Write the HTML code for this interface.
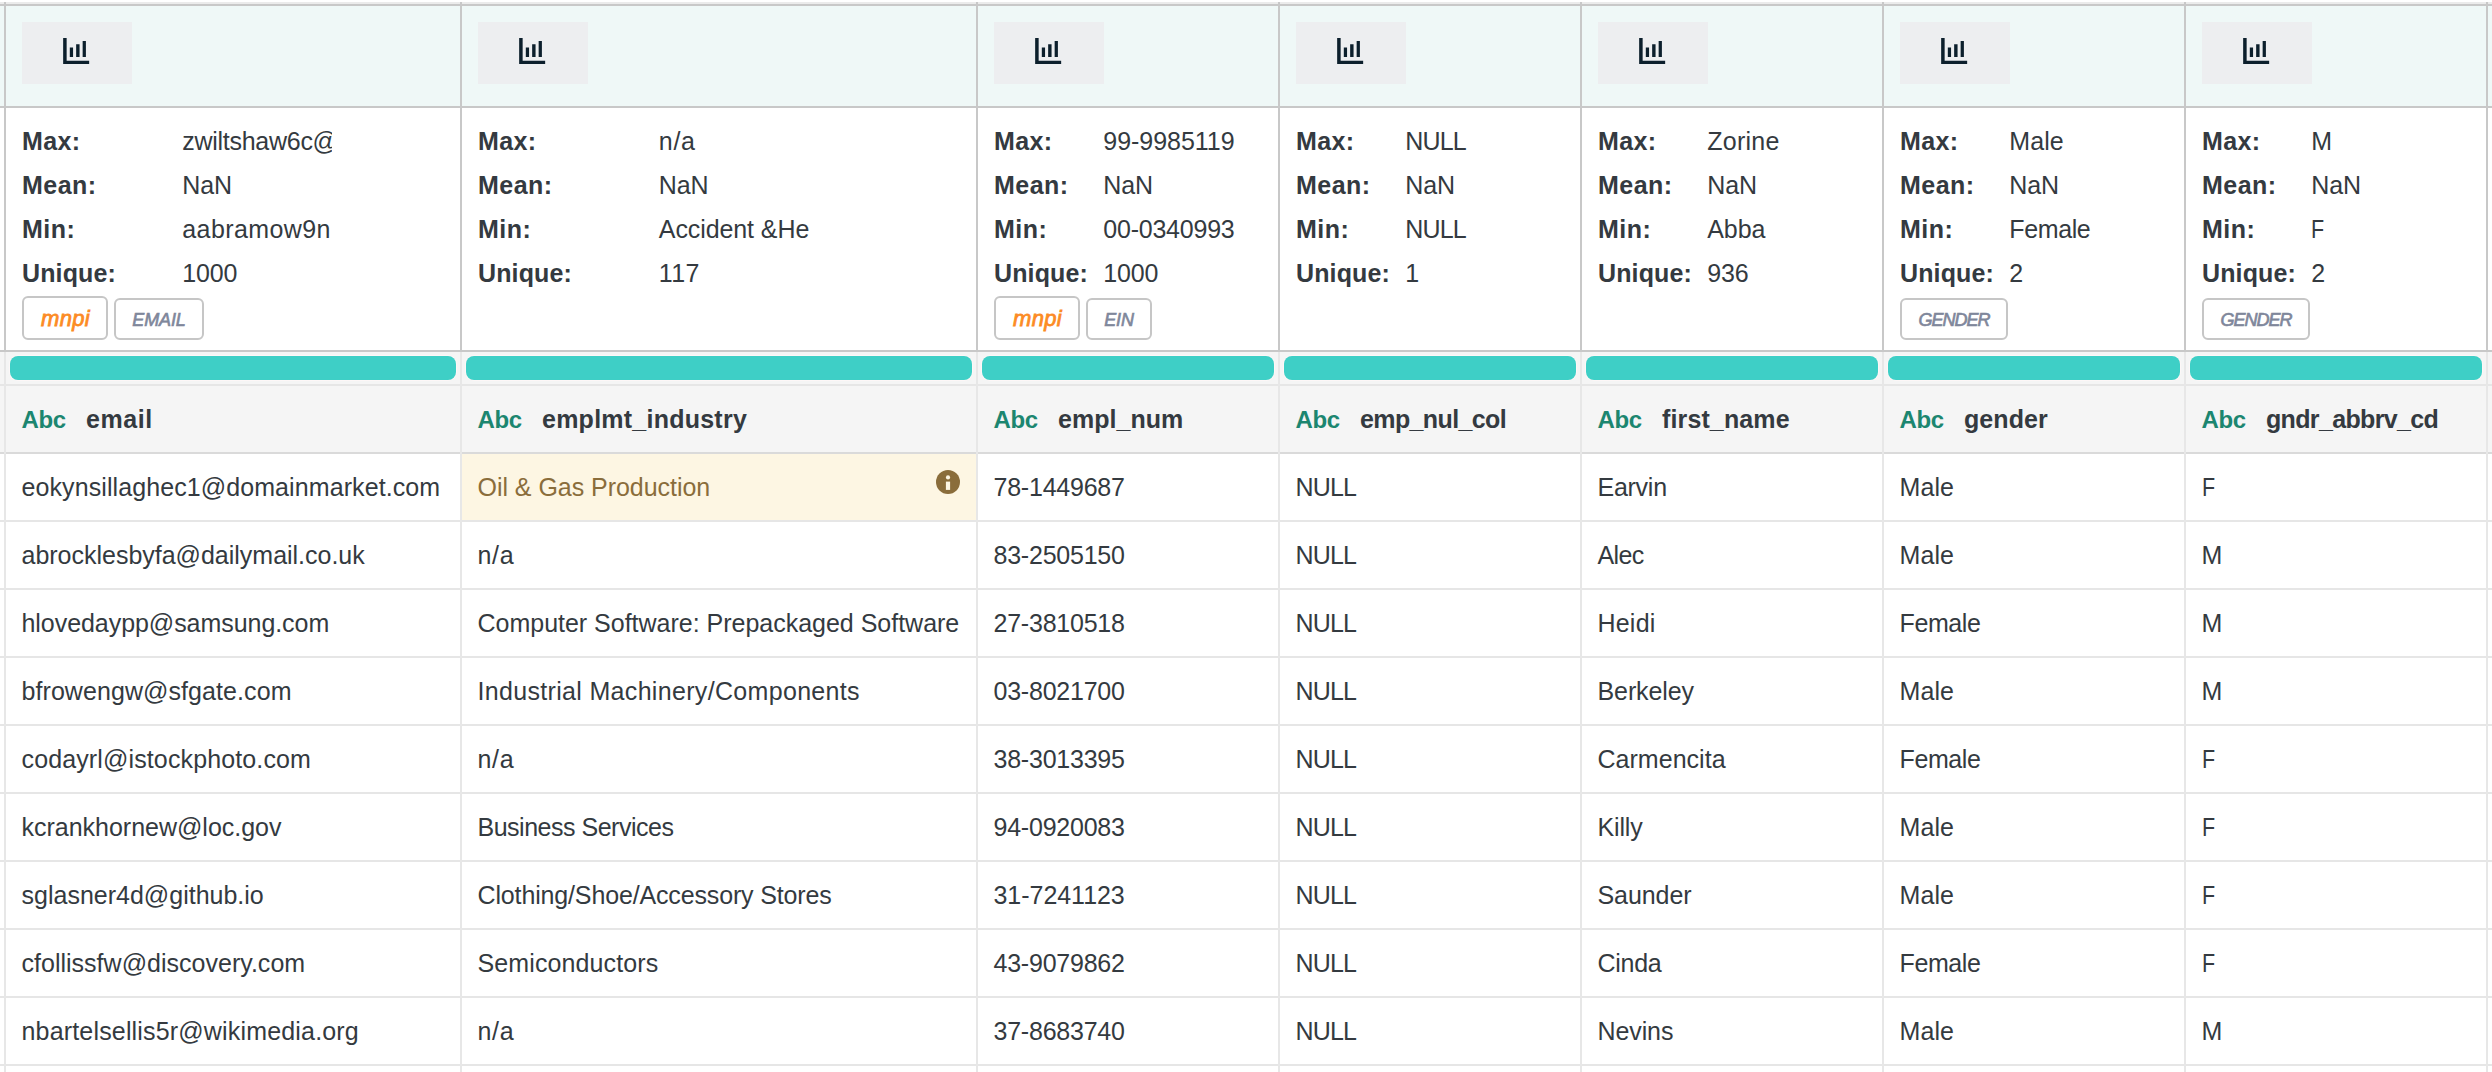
<!DOCTYPE html><html><head><meta charset='utf-8'><title>table</title><style>

html,body{margin:0;padding:0;background:#fff;}
body{width:2492px;height:1072px;position:relative;overflow:hidden;font-family:"Liberation Sans",sans-serif;}
.bg{position:absolute;left:0;width:2492px;}
.vl{position:absolute;width:2px;}
.t{position:absolute;white-space:pre;line-height:30px;color:#343a40;}
.b{font-weight:700;font-size:25px;}
.r{font-size:25px;}
.abc{font-weight:700;font-size:24px;color:#1c8670;}
.hl{color:#8a6d3b;}
.btn{position:absolute;top:22px;width:110px;height:62px;background:#edeef0;}
.btn svg{position:absolute;left:41.4px;top:15.7px;}
.bar{position:absolute;top:356px;height:24px;border-radius:8px;background:#3ecfc6;box-shadow:0 0 0 1px rgba(255,248,248,.8);}
.tag{position:absolute;box-sizing:border-box;border:2px solid #c6c6c6;border-radius:6px;background:#fff;text-align:center;font-style:italic;font-weight:400;white-space:pre;}
.tag.m{top:296px;height:44px;width:86px;color:#fc8b24;font-size:22px;line-height:42px;letter-spacing:0.3px;text-indent:1px;-webkit-text-stroke:0.8px #fc8b24;}
.tag.g{top:298px;height:42px;color:#7f879b;font-size:18px;line-height:41px;-webkit-text-stroke:0.65px #7f879b;}

</style></head><body>
<div class='bg' style='top:2px;height:2px;background:#ebebeb'></div>
<div class='bg' style='top:4px;height:2px;background:#c8c8c8'></div>
<div class='bg' style='top:6px;height:100px;background:#eff8f7'></div>
<div class='bg' style='top:106px;height:2px;background:#c8c8c8'></div>
<div class='bg' style='top:350px;height:2px;background:#c8c8c8'></div>
<div class='bg' style='top:352px;height:32px;background:#f5f5f5'></div>
<div class='bg' style='top:384px;height:2px;background:#e6e6e6'></div>
<div class='bg' style='top:386px;height:66px;background:#f5f5f5'></div>
<div class='bg' style='top:452px;height:2px;background:#dadada'></div>
<div class='bg' style='top:520px;height:2px;background:#e6e6e6'></div>
<div class='bg' style='top:588px;height:2px;background:#e6e6e6'></div>
<div class='bg' style='top:656px;height:2px;background:#e6e6e6'></div>
<div class='bg' style='top:724px;height:2px;background:#e6e6e6'></div>
<div class='bg' style='top:792px;height:2px;background:#e6e6e6'></div>
<div class='bg' style='top:860px;height:2px;background:#e6e6e6'></div>
<div class='bg' style='top:928px;height:2px;background:#e6e6e6'></div>
<div class='bg' style='top:996px;height:2px;background:#e6e6e6'></div>
<div class='bg' style='top:1064px;height:2px;background:#e6e6e6'></div>
<div style='position:absolute;left:462px;top:454px;width:514px;height:66px;background:#fdf6e3'></div>
<div class='vl' style='left:4px;top:2px;height:350px;background:#c8c8c8'></div>
<div class='vl' style='left:4px;top:352px;height:720px;background:#e7e7e7'></div>
<div class='vl' style='left:460px;top:2px;height:350px;background:#c8c8c8'></div>
<div class='vl' style='left:460px;top:352px;height:720px;background:#e7e7e7'></div>
<div class='vl' style='left:976px;top:2px;height:350px;background:#c8c8c8'></div>
<div class='vl' style='left:976px;top:352px;height:720px;background:#e7e7e7'></div>
<div class='vl' style='left:1278px;top:2px;height:350px;background:#c8c8c8'></div>
<div class='vl' style='left:1278px;top:352px;height:720px;background:#e7e7e7'></div>
<div class='vl' style='left:1580px;top:2px;height:350px;background:#c8c8c8'></div>
<div class='vl' style='left:1580px;top:352px;height:720px;background:#e7e7e7'></div>
<div class='vl' style='left:1882px;top:2px;height:350px;background:#c8c8c8'></div>
<div class='vl' style='left:1882px;top:352px;height:720px;background:#e7e7e7'></div>
<div class='vl' style='left:2184px;top:2px;height:350px;background:#c8c8c8'></div>
<div class='vl' style='left:2184px;top:352px;height:720px;background:#e7e7e7'></div>
<div class='vl' style='left:2486px;top:2px;height:350px;background:#c8c8c8'></div>
<div class='vl' style='left:2486px;top:352px;height:720px;background:#e7e7e7'></div>
<div class='btn' style='left:22px'><svg width='26.3' height='26' viewBox='0 0 16 16'><path fill='#0c1f2c' d='M0 0h2.15v13.95H16V16H0zM4.1 5.9h2v5.8h-2zM8 3.9h2.1v7.8H8zM12 1.9h2v9.8h-2z'/></svg></div>
<div class='bar' style='left:10px;width:446px'></div>
<div class='tag m' style='left:22px'>mnpi</div>
<div class='tag g' style='left:114px;width:90px;letter-spacing:-0.1px'>EMAIL</div>
<div class='btn' style='left:478px'><svg width='26.3' height='26' viewBox='0 0 16 16'><path fill='#0c1f2c' d='M0 0h2.15v13.95H16V16H0zM4.1 5.9h2v5.8h-2zM8 3.9h2.1v7.8H8zM12 1.9h2v9.8h-2z'/></svg></div>
<div class='bar' style='left:466px;width:506px'></div>
<div class='btn' style='left:994px'><svg width='26.3' height='26' viewBox='0 0 16 16'><path fill='#0c1f2c' d='M0 0h2.15v13.95H16V16H0zM4.1 5.9h2v5.8h-2zM8 3.9h2.1v7.8H8zM12 1.9h2v9.8h-2z'/></svg></div>
<div class='bar' style='left:982px;width:292px'></div>
<div class='tag m' style='left:994px'>mnpi</div>
<div class='tag g' style='left:1086px;width:66px;letter-spacing:-0.1px'>EIN</div>
<div class='btn' style='left:1296px'><svg width='26.3' height='26' viewBox='0 0 16 16'><path fill='#0c1f2c' d='M0 0h2.15v13.95H16V16H0zM4.1 5.9h2v5.8h-2zM8 3.9h2.1v7.8H8zM12 1.9h2v9.8h-2z'/></svg></div>
<div class='bar' style='left:1284px;width:292px'></div>
<div class='btn' style='left:1598px'><svg width='26.3' height='26' viewBox='0 0 16 16'><path fill='#0c1f2c' d='M0 0h2.15v13.95H16V16H0zM4.1 5.9h2v5.8h-2zM8 3.9h2.1v7.8H8zM12 1.9h2v9.8h-2z'/></svg></div>
<div class='bar' style='left:1586px;width:292px'></div>
<div class='btn' style='left:1900px'><svg width='26.3' height='26' viewBox='0 0 16 16'><path fill='#0c1f2c' d='M0 0h2.15v13.95H16V16H0zM4.1 5.9h2v5.8h-2zM8 3.9h2.1v7.8H8zM12 1.9h2v9.8h-2z'/></svg></div>
<div class='bar' style='left:1888px;width:292px'></div>
<div class='tag g' style='left:1900px;width:108px;letter-spacing:-1.0px'>GENDER</div>
<div class='btn' style='left:2202px'><svg width='26.3' height='26' viewBox='0 0 16 16'><path fill='#0c1f2c' d='M0 0h2.15v13.95H16V16H0zM4.1 5.9h2v5.8h-2zM8 3.9h2.1v7.8H8zM12 1.9h2v9.8h-2z'/></svg></div>
<div class='bar' style='left:2190px;width:292px'></div>
<div class='tag g' style='left:2202px;width:108px;letter-spacing:-1.0px'>GENDER</div>
<svg style='position:absolute;left:936px;top:469.7px' width='24' height='24' viewBox='0 0 24 24'><circle cx='12' cy='12' r='12' fill='#8a6d3b'/><circle cx='12' cy='7.4' r='2.1' fill='#fdf6e3'/><rect x='9.9' y='11.6' width='4.2' height='8.3' fill='#fdf6e3'/></svg>
<div id='t0' class='t b' style='left:22px;top:125.84px;letter-spacing:0.394px;'>Max:</div>
<div id='t1' class='t r' style='left:182.3px;top:125.84px;letter-spacing:-0.278px;width:150px;overflow:hidden;'>zwiltshaw6c@</div>
<div id='t2' class='t b' style='left:22px;top:169.84px;letter-spacing:0.478px;'>Mean:</div>
<div id='t3' class='t r' style='left:182.3px;top:169.84px;letter-spacing:-0.160px;'>NaN</div>
<div id='t4' class='t b' style='left:22px;top:213.84px;letter-spacing:0.474px;'>Min:</div>
<div id='t5' class='t r' style='left:182.3px;top:213.84px;letter-spacing:0.396px;'>aabramow9n</div>
<div id='t6' class='t b' style='left:22px;top:257.84px;letter-spacing:0.125px;'>Unique:</div>
<div id='t7' class='t r' style='left:182.3px;top:257.84px;letter-spacing:-0.184px;'>1000</div>
<div id='t8' class='t abc' style='left:21.5px;top:404.68px;letter-spacing:-0.419px;'>Abc</div>
<div id='t9' class='t b' style='left:86px;top:404.34px;letter-spacing:0.591px;'>email</div>
<div id='t10' class='t r' style='left:21.5px;top:472.34px;letter-spacing:0.089px;'>eokynsillaghec1@domainmarket.com</div>
<div id='t11' class='t r' style='left:21.5px;top:540.34px;letter-spacing:-0.012px;'>abrocklesbyfa@dailymail.co.uk</div>
<div id='t12' class='t r' style='left:21.5px;top:608.34px;letter-spacing:-0.054px;'>hlovedaypp@samsung.com</div>
<div id='t13' class='t r' style='left:21.5px;top:676.34px;letter-spacing:0.074px;'>bfrowengw@sfgate.com</div>
<div id='t14' class='t r' style='left:21.5px;top:744.34px;letter-spacing:0.126px;'>codayrl@istockphoto.com</div>
<div id='t15' class='t r' style='left:21.5px;top:812.34px;letter-spacing:-0.011px;'>kcrankhornew@loc.gov</div>
<div id='t16' class='t r' style='left:21.5px;top:880.34px;letter-spacing:0.004px;'>sglasner4d@github.io</div>
<div id='t17' class='t r' style='left:21.5px;top:948.34px;letter-spacing:0.014px;'>cfollissfw@discovery.com</div>
<div id='t18' class='t r' style='left:21.5px;top:1016.34px;letter-spacing:0.171px;'>nbartelsellis5r@wikimedia.org</div>
<div id='t19' class='t b' style='left:478px;top:125.84px;letter-spacing:0.394px;'>Max:</div>
<div id='t20' class='t r' style='left:658.8px;top:125.84px;letter-spacing:0.708px;'>n/a</div>
<div id='t21' class='t b' style='left:478px;top:169.84px;letter-spacing:0.478px;'>Mean:</div>
<div id='t22' class='t r' style='left:658.8px;top:169.84px;letter-spacing:-0.160px;'>NaN</div>
<div id='t23' class='t b' style='left:478px;top:213.84px;letter-spacing:0.474px;'>Min:</div>
<div id='t24' class='t r' style='left:658.8px;top:213.84px;letter-spacing:-0.088px;'>Accident &amp;He</div>
<div id='t25' class='t b' style='left:478px;top:257.84px;letter-spacing:0.125px;'>Unique:</div>
<div id='t26' class='t r' style='left:658.8px;top:257.84px;letter-spacing:0.436px;'>117</div>
<div id='t27' class='t abc' style='left:477.5px;top:404.68px;letter-spacing:-0.419px;'>Abc</div>
<div id='t28' class='t b' style='left:542px;top:404.34px;letter-spacing:0.242px;'>emplmt_industry</div>
<div id='t29' class='t r hl' style='left:477.5px;top:472.34px;letter-spacing:-0.037px;'>Oil &amp; Gas Production</div>
<div id='t30' class='t r' style='left:477.5px;top:540.34px;letter-spacing:0.708px;'>n/a</div>
<div id='t31' class='t r' style='left:477.5px;top:608.34px;letter-spacing:-0.011px;'>Computer Software: Prepackaged Software</div>
<div id='t32' class='t r' style='left:477.5px;top:676.34px;letter-spacing:0.323px;'>Industrial Machinery/Components</div>
<div id='t33' class='t r' style='left:477.5px;top:744.34px;letter-spacing:0.708px;'>n/a</div>
<div id='t34' class='t r' style='left:477.5px;top:812.34px;letter-spacing:-0.486px;'>Business Services</div>
<div id='t35' class='t r' style='left:477.5px;top:880.34px;letter-spacing:-0.145px;'>Clothing/Shoe/Accessory Stores</div>
<div id='t36' class='t r' style='left:477.5px;top:948.34px;letter-spacing:0.108px;'>Semiconductors</div>
<div id='t37' class='t r' style='left:477.5px;top:1016.34px;letter-spacing:0.708px;'>n/a</div>
<div id='t38' class='t b' style='left:994px;top:125.84px;letter-spacing:0.394px;'>Max:</div>
<div id='t39' class='t r' style='left:1103.3px;top:125.84px;letter-spacing:-0.038px;'>99-9985119</div>
<div id='t40' class='t b' style='left:994px;top:169.84px;letter-spacing:0.478px;'>Mean:</div>
<div id='t41' class='t r' style='left:1103.3px;top:169.84px;letter-spacing:-0.160px;'>NaN</div>
<div id='t42' class='t b' style='left:994px;top:213.84px;letter-spacing:0.474px;'>Min:</div>
<div id='t43' class='t r' style='left:1103.3px;top:213.84px;letter-spacing:-0.224px;'>00-0340993</div>
<div id='t44' class='t b' style='left:994px;top:257.84px;letter-spacing:0.125px;'>Unique:</div>
<div id='t45' class='t r' style='left:1103.3px;top:257.84px;letter-spacing:-0.184px;'>1000</div>
<div id='t46' class='t abc' style='left:993.5px;top:404.68px;letter-spacing:-0.419px;'>Abc</div>
<div id='t47' class='t b' style='left:1058px;top:404.34px;letter-spacing:0.026px;'>empl_num</div>
<div id='t48' class='t r' style='left:993.5px;top:472.34px;letter-spacing:-0.224px;'>78-1449687</div>
<div id='t49' class='t r' style='left:993.5px;top:540.34px;letter-spacing:-0.224px;'>83-2505150</div>
<div id='t50' class='t r' style='left:993.5px;top:608.34px;letter-spacing:-0.224px;'>27-3810518</div>
<div id='t51' class='t r' style='left:993.5px;top:676.34px;letter-spacing:-0.224px;'>03-8021700</div>
<div id='t52' class='t r' style='left:993.5px;top:744.34px;letter-spacing:-0.224px;'>38-3013395</div>
<div id='t53' class='t r' style='left:993.5px;top:812.34px;letter-spacing:-0.224px;'>94-0920083</div>
<div id='t54' class='t r' style='left:993.5px;top:880.34px;letter-spacing:-0.038px;'>31-7241123</div>
<div id='t55' class='t r' style='left:993.5px;top:948.34px;letter-spacing:-0.224px;'>43-9079862</div>
<div id='t56' class='t r' style='left:993.5px;top:1016.34px;letter-spacing:-0.224px;'>37-8683740</div>
<div id='t57' class='t b' style='left:1296px;top:125.84px;letter-spacing:0.394px;'>Max:</div>
<div id='t58' class='t r' style='left:1405.3px;top:125.84px;letter-spacing:-0.860px;'>NULL</div>
<div id='t59' class='t b' style='left:1296px;top:169.84px;letter-spacing:0.478px;'>Mean:</div>
<div id='t60' class='t r' style='left:1405.3px;top:169.84px;letter-spacing:-0.160px;'>NaN</div>
<div id='t61' class='t b' style='left:1296px;top:213.84px;letter-spacing:0.474px;'>Min:</div>
<div id='t62' class='t r' style='left:1405.3px;top:213.84px;letter-spacing:-0.860px;'>NULL</div>
<div id='t63' class='t b' style='left:1296px;top:257.84px;letter-spacing:0.125px;'>Unique:</div>
<div id='t64' class='t r' style='left:1405.3px;top:257.84px;'>1</div>
<div id='t65' class='t abc' style='left:1295.5px;top:404.68px;letter-spacing:-0.419px;'>Abc</div>
<div id='t66' class='t b' style='left:1360px;top:404.34px;letter-spacing:-0.615px;'>emp_nul_col</div>
<div id='t67' class='t r' style='left:1295.5px;top:472.34px;letter-spacing:-0.860px;'>NULL</div>
<div id='t68' class='t r' style='left:1295.5px;top:540.34px;letter-spacing:-0.860px;'>NULL</div>
<div id='t69' class='t r' style='left:1295.5px;top:608.34px;letter-spacing:-0.860px;'>NULL</div>
<div id='t70' class='t r' style='left:1295.5px;top:676.34px;letter-spacing:-0.860px;'>NULL</div>
<div id='t71' class='t r' style='left:1295.5px;top:744.34px;letter-spacing:-0.860px;'>NULL</div>
<div id='t72' class='t r' style='left:1295.5px;top:812.34px;letter-spacing:-0.860px;'>NULL</div>
<div id='t73' class='t r' style='left:1295.5px;top:880.34px;letter-spacing:-0.860px;'>NULL</div>
<div id='t74' class='t r' style='left:1295.5px;top:948.34px;letter-spacing:-0.860px;'>NULL</div>
<div id='t75' class='t r' style='left:1295.5px;top:1016.34px;letter-spacing:-0.860px;'>NULL</div>
<div id='t76' class='t b' style='left:1598px;top:125.84px;letter-spacing:0.394px;'>Max:</div>
<div id='t77' class='t r' style='left:1707.3px;top:125.84px;letter-spacing:0.230px;'>Zorine</div>
<div id='t78' class='t b' style='left:1598px;top:169.84px;letter-spacing:0.478px;'>Mean:</div>
<div id='t79' class='t r' style='left:1707.3px;top:169.84px;letter-spacing:-0.160px;'>NaN</div>
<div id='t80' class='t b' style='left:1598px;top:213.84px;letter-spacing:0.474px;'>Min:</div>
<div id='t81' class='t r' style='left:1707.3px;top:213.84px;letter-spacing:-0.110px;'>Abba</div>
<div id='t82' class='t b' style='left:1598px;top:257.84px;letter-spacing:0.125px;'>Unique:</div>
<div id='t83' class='t r' style='left:1707.3px;top:257.84px;letter-spacing:-0.184px;'>936</div>
<div id='t84' class='t abc' style='left:1597.5px;top:404.68px;letter-spacing:-0.419px;'>Abc</div>
<div id='t85' class='t b' style='left:1662px;top:404.34px;letter-spacing:0.129px;'>first_name</div>
<div id='t86' class='t r' style='left:1597.5px;top:472.34px;letter-spacing:-0.260px;'>Earvin</div>
<div id='t87' class='t r' style='left:1597.5px;top:540.34px;letter-spacing:-0.623px;'>Alec</div>
<div id='t88' class='t r' style='left:1597.5px;top:608.34px;letter-spacing:0.207px;'>Heidi</div>
<div id='t89' class='t r' style='left:1597.5px;top:676.34px;letter-spacing:-0.101px;'>Berkeley</div>
<div id='t90' class='t r' style='left:1597.5px;top:744.34px;letter-spacing:0.029px;'>Carmencita</div>
<div id='t91' class='t r' style='left:1597.5px;top:812.34px;letter-spacing:-0.171px;'>Killy</div>
<div id='t92' class='t r' style='left:1597.5px;top:880.34px;letter-spacing:-0.083px;'>Saunder</div>
<div id='t93' class='t r' style='left:1597.5px;top:948.34px;letter-spacing:-0.266px;'>Cinda</div>
<div id='t94' class='t r' style='left:1597.5px;top:1016.34px;letter-spacing:-0.098px;'>Nevins</div>
<div id='t95' class='t b' style='left:1900px;top:125.84px;letter-spacing:0.394px;'>Max:</div>
<div id='t96' class='t r' style='left:2009.3px;top:125.84px;letter-spacing:0.091px;'>Male</div>
<div id='t97' class='t b' style='left:1900px;top:169.84px;letter-spacing:0.478px;'>Mean:</div>
<div id='t98' class='t r' style='left:2009.3px;top:169.84px;letter-spacing:-0.160px;'>NaN</div>
<div id='t99' class='t b' style='left:1900px;top:213.84px;letter-spacing:0.474px;'>Min:</div>
<div id='t100' class='t r' style='left:2009.3px;top:213.84px;letter-spacing:-0.386px;'>Female</div>
<div id='t101' class='t b' style='left:1900px;top:257.84px;letter-spacing:0.125px;'>Unique:</div>
<div id='t102' class='t r' style='left:2009.3px;top:257.84px;'>2</div>
<div id='t103' class='t abc' style='left:1899.5px;top:404.68px;letter-spacing:-0.419px;'>Abc</div>
<div id='t104' class='t b' style='left:1964px;top:404.34px;letter-spacing:0.070px;'>gender</div>
<div id='t105' class='t r' style='left:1899.5px;top:472.34px;letter-spacing:0.091px;'>Male</div>
<div id='t106' class='t r' style='left:1899.5px;top:540.34px;letter-spacing:0.091px;'>Male</div>
<div id='t107' class='t r' style='left:1899.5px;top:608.34px;letter-spacing:-0.386px;'>Female</div>
<div id='t108' class='t r' style='left:1899.5px;top:676.34px;letter-spacing:0.091px;'>Male</div>
<div id='t109' class='t r' style='left:1899.5px;top:744.34px;letter-spacing:-0.386px;'>Female</div>
<div id='t110' class='t r' style='left:1899.5px;top:812.34px;letter-spacing:0.091px;'>Male</div>
<div id='t111' class='t r' style='left:1899.5px;top:880.34px;letter-spacing:0.091px;'>Male</div>
<div id='t112' class='t r' style='left:1899.5px;top:948.34px;letter-spacing:-0.386px;'>Female</div>
<div id='t113' class='t r' style='left:1899.5px;top:1016.34px;letter-spacing:0.091px;'>Male</div>
<div id='t114' class='t b' style='left:2202px;top:125.84px;letter-spacing:0.394px;'>Max:</div>
<div id='t115' class='t r' style='left:2311.3px;top:125.84px;'>M</div>
<div id='t116' class='t b' style='left:2202px;top:169.84px;letter-spacing:0.478px;'>Mean:</div>
<div id='t117' class='t r' style='left:2311.3px;top:169.84px;letter-spacing:-0.160px;'>NaN</div>
<div id='t118' class='t b' style='left:2202px;top:213.84px;letter-spacing:0.474px;'>Min:</div>
<div id='t119' class='t r' style='left:2311.3px;top:213.84px;transform:scaleX(.86);transform-origin:0 0;'>F</div>
<div id='t120' class='t b' style='left:2202px;top:257.84px;letter-spacing:0.125px;'>Unique:</div>
<div id='t121' class='t r' style='left:2311.3px;top:257.84px;'>2</div>
<div id='t122' class='t abc' style='left:2201.5px;top:404.68px;letter-spacing:-0.419px;'>Abc</div>
<div id='t123' class='t b' style='left:2266px;top:404.34px;letter-spacing:-0.654px;'>gndr_abbrv_cd</div>
<div id='t124' class='t r' style='left:2201.5px;top:472.34px;transform:scaleX(.86);transform-origin:0 0;'>F</div>
<div id='t125' class='t r' style='left:2201.5px;top:540.34px;'>M</div>
<div id='t126' class='t r' style='left:2201.5px;top:608.34px;'>M</div>
<div id='t127' class='t r' style='left:2201.5px;top:676.34px;'>M</div>
<div id='t128' class='t r' style='left:2201.5px;top:744.34px;transform:scaleX(.86);transform-origin:0 0;'>F</div>
<div id='t129' class='t r' style='left:2201.5px;top:812.34px;transform:scaleX(.86);transform-origin:0 0;'>F</div>
<div id='t130' class='t r' style='left:2201.5px;top:880.34px;transform:scaleX(.86);transform-origin:0 0;'>F</div>
<div id='t131' class='t r' style='left:2201.5px;top:948.34px;transform:scaleX(.86);transform-origin:0 0;'>F</div>
<div id='t132' class='t r' style='left:2201.5px;top:1016.34px;'>M</div>
</body></html>
